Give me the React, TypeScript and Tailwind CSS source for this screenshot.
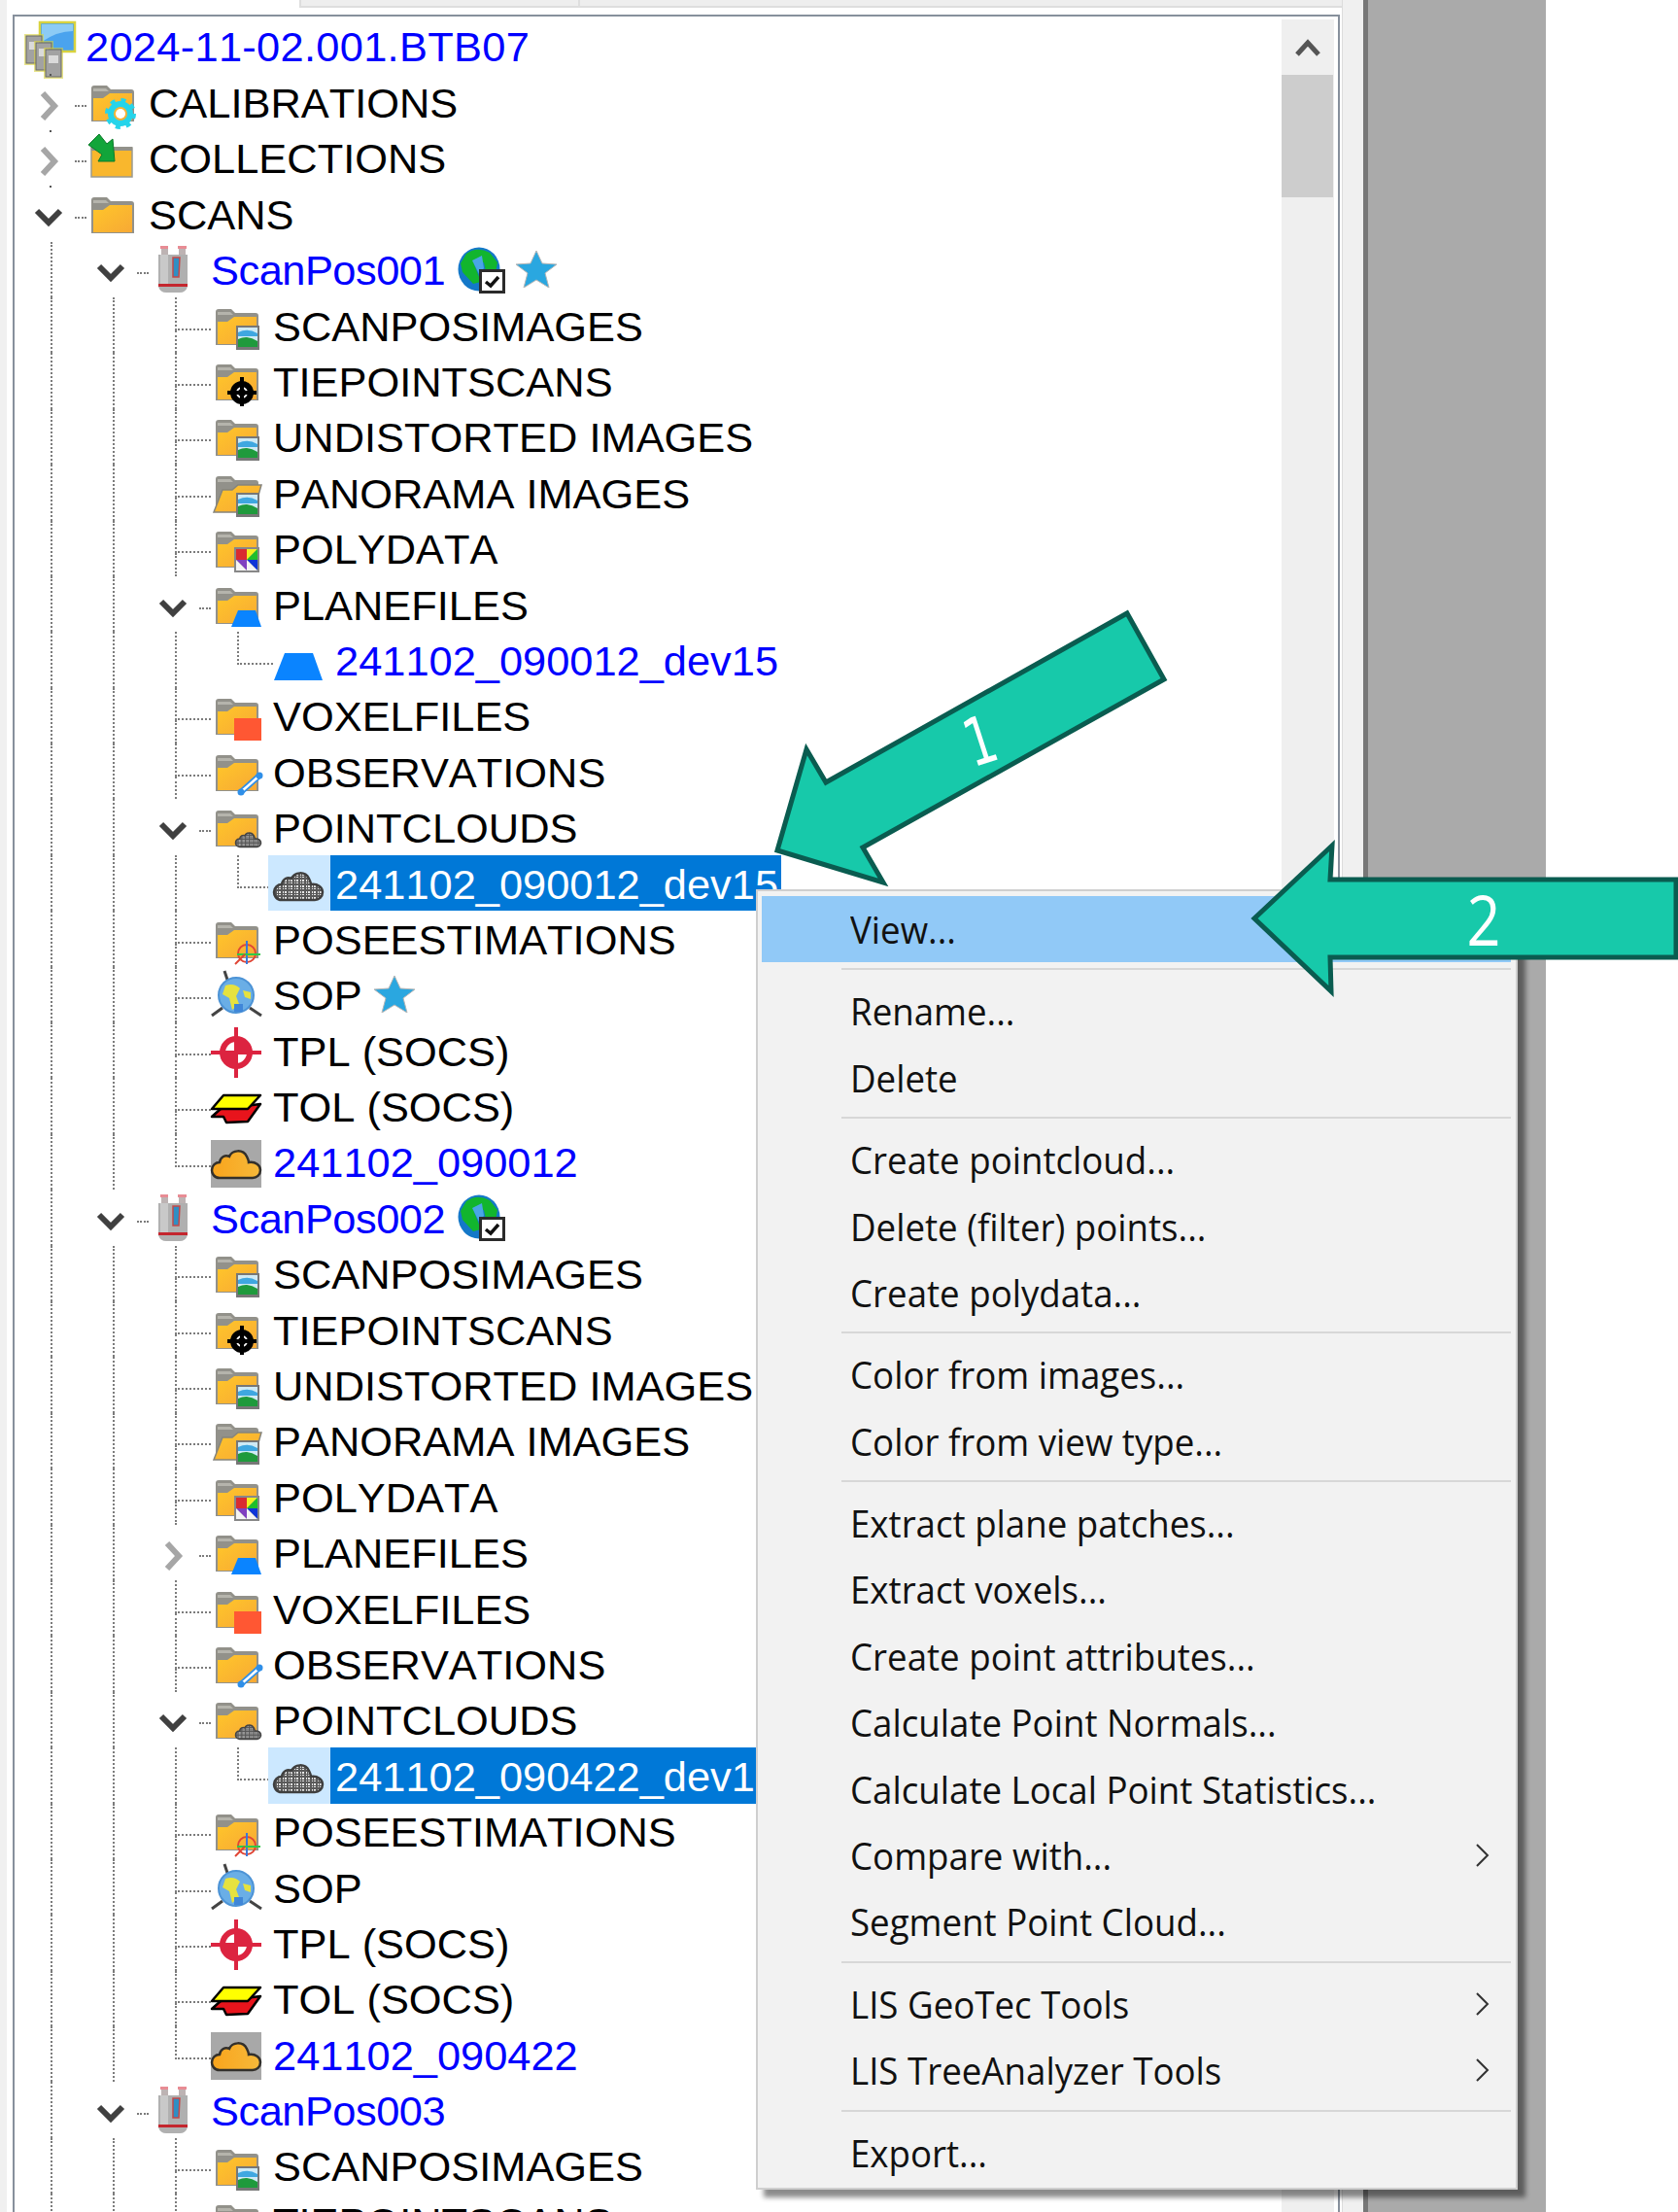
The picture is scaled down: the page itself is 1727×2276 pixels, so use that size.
import React from "react";

type IconName =
  | "root" | "gear" | "collect" | "plain" | "image" | "tie" | "pano" | "poly" | "plane" | "voxel"
  | "obs" | "pc" | "pose" | "sop" | "tpl" | "tol" | "cloudOrange" | "trap" | "cloudGrey" | "scanner";

type Row = {
  label: string;
  level: number;
  icon: IconName;
  blue?: boolean;
  expander?: "open" | "closed";
  last?: boolean;
  selected?: boolean;
  globe?: boolean;
  star?: boolean;
};

const scanChildren = (stamp: string, dev: string, expandPlanes: boolean, starred: boolean): Row[] => {
  const rows: Row[] = [
    { label: "SCANPOSIMAGES", level: 2, icon: "image" },
    { label: "TIEPOINTSCANS", level: 2, icon: "tie" },
    { label: "UNDISTORTED IMAGES", level: 2, icon: "image" },
    { label: "PANORAMA IMAGES", level: 2, icon: "pano" },
    { label: "POLYDATA", level: 2, icon: "poly" },
    { label: "PLANEFILES", level: 2, icon: "plane", expander: expandPlanes ? "open" : "closed" },
  ];
  if (expandPlanes) rows.push({ label: dev, level: 3, icon: "trap", blue: true, last: true });
  rows.push(
    { label: "VOXELFILES", level: 2, icon: "voxel" },
    { label: "OBSERVATIONS", level: 2, icon: "obs" },
    { label: "POINTCLOUDS", level: 2, icon: "pc", expander: "open" },
    { label: dev, level: 3, icon: "cloudGrey", last: true, selected: true },
    { label: "POSEESTIMATIONS", level: 2, icon: "pose" },
    { label: "SOP", level: 2, icon: "sop", star: starred },
    { label: "TPL (SOCS)", level: 2, icon: "tpl" },
    { label: "TOL (SOCS)", level: 2, icon: "tol" },
    { label: stamp, level: 2, icon: "cloudOrange", blue: true, last: true },
  );
  return rows;
};

const rows: Row[] = [
  { label: "CALIBRATIONS", level: 0, icon: "gear", expander: "closed" },
  { label: "COLLECTIONS", level: 0, icon: "collect", expander: "closed" },
  { label: "SCANS", level: 0, icon: "plain", expander: "open" },
  { label: "ScanPos001", level: 1, icon: "scanner", blue: true, expander: "open", globe: true, star: true },
  ...scanChildren("241102_090012", "241102_090012_dev15", true, true),
  { label: "ScanPos002", level: 1, icon: "scanner", blue: true, expander: "open", globe: true },
  ...scanChildren("241102_090422", "241102_090422_dev15", false, false),
  { label: "ScanPos003", level: 1, icon: "scanner", blue: true, expander: "open" },
  { label: "SCANPOSIMAGES", level: 2, icon: "image" },
  { label: "TIEPOINTSCANS", level: 2, icon: "tie" },
];

const menu: (string | { label: string; sub?: boolean; active?: boolean })[] = [
  { label: "View...", active: true },
  "sep",
  { label: "Rename..." },
  { label: "Delete" },
  "sep",
  { label: "Create pointcloud..." },
  { label: "Delete (filter) points..." },
  { label: "Create polydata..." },
  "sep",
  { label: "Color from images..." },
  { label: "Color from view type..." },
  "sep",
  { label: "Extract plane patches..." },
  { label: "Extract voxels..." },
  { label: "Create point attributes..." },
  { label: "Calculate Point Normals..." },
  { label: "Calculate Local Point Statistics..." },
  { label: "Compare with...", sub: true },
  { label: "Segment Point Cloud..." },
  "sep",
  { label: "LIS GeoTec Tools", sub: true },
  { label: "LIS TreeAnalyzer Tools", sub: true },
  "sep",
  { label: "Export..." },
];

const cloudPath = "M9 43 C3 43 1 38 1 35 C1 30 5 27 9 27 C10 21 15 19 19 21 C22 14 33 13 37 21 C39 25 39 26 39 27 C46 26 51 30 51 35 C51 40 47 43 43 43 Z";

const Folder = ({ open }: { open?: boolean }) => (
  <>
    <linearGradient id="folderFill" x1="0" y1="0" x2="1" y2="1">
      <stop offset="0" stopColor="#ffc62a" />
      <stop offset="1" stopColor="#f7a935" />
    </linearGradient>
    <path d="M5 12 Q5 9 8 9 H21 L25 13 H46 Q49 13 49 16 V46 H5 Z" fill="#92918a" />
    <path d="M7 12 H20 L23 15 H7 Z" fill="#b5b4ac" />
    {open ? (
      <path d="M3 46 L12 23 H22 L28 18 H52 L44 46 Z" fill="url(#folderFill)" stroke="#85847c" strokeWidth="1.5" />
    ) : (
      <path d="M7 45 V22 H17 L24 17 H47 V45 Z" fill="url(#folderFill)" />
    )}
  </>
);

const Picture = () => (
  <>
    <rect x="26" y="26" width="24" height="25" fill="#777" />
    <rect x="28" y="28" width="20" height="20" fill="#cfeaf5" />
    <path d="M28 33 Q38 28 48 34 V37 H28 Z" fill="#3fa7e0" />
    <path d="M28 40 Q38 35 48 42 V48 H28 Z" fill="#1f9a3c" />
  </>
);

function TreeIcon({ name }: { name: IconName }) {
  let body: React.ReactNode = null;
  switch (name) {
    case "root":
      body = (
        <>
          <rect x="16" y="1" width="36" height="30" fill="#4aa3ee" stroke="#d8d23f" strokeWidth="2.5" />
          <path d="M18 3 H50 V10 Q34 10 18 21 Z" fill="#8ccbf5" />
          {[0, 10, 20].map((d) => (
            <g key={d}>
              <rect x={0 + d} y={13 + d * 0.7} width="20" height="32" fill="#d8d23f" opacity="0.6" />
              <rect x={2 + d} y={15 + d * 0.7} width="16" height="28" fill="#a2a2a2" stroke="#666" />
              <rect x={5 + d} y={21 + d * 0.7} width="10" height="8" fill="#dadada" />
            </g>
          ))}
        </>
      );
      break;
    case "gear":
      body = (
        <>
          <Folder />
          <circle cx="35" cy="38" r="10" fill="none" stroke="#25d4ea" strokeWidth="6" />
          <circle cx="35" cy="38" r="14" fill="none" stroke="#25d4ea" strokeWidth="4" strokeDasharray="5 6" />
          <circle cx="35" cy="38" r="5" fill="#fff" />
        </>
      );
      break;
    case "collect":
      body = (
        <>
          <path d="M5 16 H47 V46 H5 Z" fill="#f9b72d" stroke="#9a9a90" strokeWidth="1.5" />
          <path d="M5 15 H47 V19 H5 Z" fill="#92918a" />
          <path d="M2 13 L13 2 L21 12 L27 7 L29 30 L12 30 L16 23 Z" fill="#12a53a" stroke="#0b7a2a" />
        </>
      );
      break;
    case "plain":
      body = <Folder />;
      break;
    case "image":
      body = (
        <>
          <Folder />
          <Picture />
        </>
      );
      break;
    case "tie":
      body = (
        <>
          <Folder />
          <circle cx="32" cy="38" r="9" fill="#fff" stroke="#000" strokeWidth="6" />
          <path d="M32 22 V52 M17 38 H47" stroke="#000" strokeWidth="4" />
          <circle cx="32" cy="38" r="4" />
        </>
      );
      break;
    case "pano":
      body = (
        <>
          <Folder open />
          <Picture />
        </>
      );
      break;
    case "poly":
      body = (
        <>
          <Folder />
          <rect x="24" y="25" width="26" height="26" fill="#888" />
          <path d="M26 27 H37 V38 H26 Z" fill="#d92b30" />
          <path d="M37 27 H48 L37 38 Z" fill="#f3ee1f" />
          <path d="M48 27 V38 H37 Z" fill="#1fbf2a" />
          <path d="M48 38 V49 L37 38 Z" fill="#0f35d8" />
          <path d="M37 38 L48 49 H37 Z" fill="#f4f4f4" />
          <path d="M26 38 H37 V49 Z" fill="#7f3fc0" />
          <path d="M26 38 L37 49 H26 Z" fill="#f4f4f4" />
        </>
      );
      break;
    case "plane":
      body = (
        <>
          <Folder />
          <path d="M28 32 H46 L52 49 H21 Z" fill="#0a84ff" />
        </>
      );
      break;
    case "voxel":
      body = (
        <>
          <Folder />
          <rect x="24" y="29" width="28" height="23" fill="#ff5733" />
        </>
      );
      break;
    case "obs":
      body = (
        <>
          <Folder />
          <path d="M31 47 L50 30" stroke="#2f8fe8" strokeWidth="6" />
          <path d="M32 46 L49 31" stroke="#fff" strokeWidth="2.5" />
          <circle cx="31" cy="47" r="3.5" fill="#2f8fe8" />
          <circle cx="50" cy="30" r="3.5" fill="#2f8fe8" />
        </>
      );
      break;
    case "pc":
      body = (
        <>
          <Folder />
          <g transform="translate(25 24) scale(0.52)">
            <pattern id="latticeSmall" width="8" height="8" patternUnits="userSpaceOnUse">
              <rect width="8" height="8" fill="#c4c4c4" />
              <path d="M0 0 H8 V8 M4 0 V8 M0 4 H8" stroke="#555" strokeWidth="2.5" fill="none" />
            </pattern>
            <path d={cloudPath} fill="url(#latticeSmall)" stroke="#444" strokeWidth="3" />
          </g>
        </>
      );
      break;
    case "pose":
      body = (
        <>
          <Folder />
          <circle cx="37" cy="41" r="9" fill="none" stroke="#e04535" strokeWidth="2" />
          <path d="M37 28 V52" stroke="#3b78d8" strokeWidth="2" />
          <path d="M27 42 H51" stroke="#2fc948" strokeWidth="2" />
          <path d="M25 52 L35 42" stroke="#e04535" strokeWidth="2" />
        </>
      );
      break;
    case "sop":
      body = (
        <>
          <path d="M14 2 L18 14 M1 48 L12 40 M52 48 L40 40" stroke="#444" strokeWidth="3" />
          <circle cx="26" cy="27" r="18" fill="#6aaee6" stroke="#4c93d6" strokeWidth="2" />
          <path d="M15 17 Q24 14 30 20 L26 28 L29 36 L22 42 L19 30 L12 26 Z" fill="#e6e23f" />
          <path d="M33 22 L41 24 L41 31 L35 29 Z" fill="#e6e23f" />
          <rect x="24" y="36" width="9" height="8" fill="#3f86d8" />
        </>
      );
      break;
    case "tpl":
      body = (
        <>
          <circle cx="26" cy="28" r="17" fill="#dc2440" />
          <path d="M26 28 V17 A11 11 0 0 0 15 28 Z" fill="#fff" />
          <path d="M26 28 V39 A11 11 0 0 0 37 28 Z" fill="#fff" />
          <path d="M26 2 V54 M0 28 H52" stroke="#dc2440" strokeWidth="4" />
        </>
      );
      break;
    case "tol":
      body = (
        <>
          <path d="M1 37 L10 29 L51 24 L38 42 L16 43 L13 37 Z" fill="#e8141c" stroke="#000" strokeWidth="2.5" strokeLinejoin="round" />
          <path d="M13 15 H51 L38 29 H1 Z" fill="#ffff00" stroke="#000" strokeWidth="2.5" strokeLinejoin="round" />
        </>
      );
      break;
    case "cloudOrange":
      body = (
        <>
          <rect x="0" y="3" width="52" height="49" fill="#a8a8a8" />
          <linearGradient id="cloudFill" x1="0" y1="0" x2="1" y2="0">
            <stop offset="0" stopColor="#f9a41c" />
            <stop offset="1" stopColor="#f6b93a" />
          </linearGradient>
          <g transform="translate(0 -1)">
            <path d={cloudPath} fill="url(#cloudFill)" stroke="#33302b" strokeWidth="2.5" />
          </g>
        </>
      );
      break;
    case "trap":
      body = <path d="M12 19 H41 L51 47 H1 Z" fill="#0a84ff" />;
      break;
    case "cloudGrey":
      body = (
        <>
          <pattern id="lattice" width="6" height="6" patternUnits="userSpaceOnUse">
            <rect width="6" height="6" fill="#e8e8e8" />
            <path d="M0 0 H6 V6 M3 0 V6 M0 3 H6" stroke="#5a5a5a" strokeWidth="2" fill="none" />
          </pattern>
          <path d={cloudPath} fill="url(#lattice)" stroke="#3f3f3f" strokeWidth="2.5" />
        </>
      );
      break;
    case "scanner":
      body = (
        <>
          <rect x="13" y="3" width="7" height="10" fill="#bdb3b3" />
          <rect x="31" y="3" width="7" height="10" fill="#bdb3b3" />
          <rect x="12" y="2" width="8" height="3" fill="#e88c94" />
          <rect x="30" y="2" width="9" height="3" fill="#e88c94" />
          <path d="M10 11 H40 V44 Q38 50 32 50 H18 Q12 50 10 44 Z" fill="#b0b0b0" />
          <rect x="12" y="11" width="8" height="30" fill="#c9c9c9" />
          <path d="M25 14 H32 L31 34 H25 Z" fill="#2e8fc4" stroke="#c2494a" strokeWidth="1.5" />
          <rect x="10" y="41" width="30" height="3" fill="#c4262e" />
        </>
      );
      break;
  }
  return (
    <svg width="52" height="52" viewBox="0 0 52 52" className="shrink-0 overflow-visible">
      {body}
    </svg>
  );
}

const Chevron = ({ open }: { open?: boolean }) => (
  <svg width="30" height="30" viewBox="0 0 30 30" className="shrink-0 mt-2">
    {open ? (
      <path d="M3 8 L15 20 L27 8" fill="none" stroke="#404040" strokeWidth="6" />
    ) : (
      <path d="M9 2 L21 15 L9 28" fill="none" stroke="#a6a6a6" strokeWidth="6" />
    )}
  </svg>
);

const Globe = () => (
  <span className="relative ml-[13px] block h-[47px] w-[48px] shrink-0">
    <svg width="44" height="46" viewBox="0 0 44 46">
      <ellipse cx="22" cy="23" rx="21.5" ry="22.5" fill="#1478c8" />
      <path d="M9 7 Q20 -1 33 6 L41 16 L38 32 L30 30 L27 16 L17 18 L24 36 L16 38 L5 26 L3 17 Z" fill="#12b52e" />
      <path d="M15 14 L25 9 L27 22 L22 28 Z" fill="#4aa6e6" />
    </svg>
    <svg width="27" height="25" viewBox="0 0 27 25" className="absolute left-[22px] top-[23px]">
      <rect x="1.5" y="1.5" width="24" height="22" fill="#fff" stroke="#2b2b2b" strokeWidth="3" />
      <path d="M7 13 L12 17 L20 8" fill="none" stroke="#111" strokeWidth="3.5" />
    </svg>
  </span>
);

const Star = () => (
  <svg width="42" height="38" viewBox="0 0 42 38" className="ml-[12px] shrink-0">
    <path d="M21 0 L27 13 L42 14 L30 23 L34 38 L21 30 L8 38 L12 23 L0 14 L15 13 Z" fill="#2aa7e0" stroke="#b5b5b5" strokeWidth="1" />
  </svg>
);

// dotted guide running through a whole row
const Guide = () => (
  <div className="h-full w-16 shrink-0">
    <div className="ml-8 h-full border-l-2 border-dotted border-[#7c7c7c]" />
  </div>
);

function Connector({ row }: { row: Row }) {
  if (row.expander) {
    return (
      <div className="relative flex h-full w-[69px] shrink-0 items-center">
        {row.level === 0 && <span className="absolute left-[31px] top-0 h-[2px] w-[2px] bg-[#555]" />}
        <span className="ml-[15px]">
          <Chevron open={row.expander === "open"} />
        </span>
        <span className="ml-[12px] mt-2 w-[12px] border-b-2 border-dotted border-[#7c7c7c]" />
      </div>
    );
  }
  return (
    <div className="flex h-full w-[69px] shrink-0 flex-col">
      <div className="ml-8 h-[calc(50%+5px)] border-b-2 border-l-2 border-dotted border-[#7c7c7c]" />
      {!row.last && <div className="ml-8 h-[calc(50%-5px)] border-l-2 border-dotted border-[#7c7c7c]" />}
    </div>
  );
}

function TreeRow({ row }: { row: Row }) {
  return (
    <div className={`flex h-[57.4px] items-center whitespace-nowrap ${row.level === 1 ? "tracking-[-0.5px]" : ""}`}>
      {Array.from({ length: row.level }).map((_, i) => (
        <Guide key={i} />
      ))}
      <Connector row={row} />
      {row.selected ? (
        <>
          <div className="-ml-[5px] flex h-full w-[64px] shrink-0 items-center bg-[#cce8ff] pl-[5px]">
            <TreeIcon name={row.icon} />
          </div>
          <span className="flex h-full items-center bg-[#0078d7] pl-[5px] pr-[3px] pt-[3px] text-white">{row.label}</span>
        </>
      ) : (
        <>
          <div className="w-[64px] shrink-0">
            <TreeIcon name={row.icon} />
          </div>
          <span className={`mt-[3px] ${row.blue ? "text-[#0000ff]" : "text-black"}`}>{row.label}</span>
        </>
      )}
      {row.globe && <Globe />}
      {row.star && <Star />}
    </div>
  );
}

function ContextMenu() {
  return (
    <div
      className="absolute left-[778px] top-[915px] h-[1338px] w-[784px] border-2 border-[#cfcfcf] bg-[#f2f2f2] pl-[4px] pr-[5px] pt-[5px] text-[39px] text-[#111] shadow-[8px_8px_5px_rgba(0,0,0,0.45)]"
      style={{ fontFamily: '"Open Sans", sans-serif' }}
    >
      {menu.map((item, i) =>
        typeof item === "string" ? (
          <div key={i} className="ml-[82px] h-[16px] pt-[6px]">
            <div className="h-[2px] w-full bg-[#d7d7d7]" />
          </div>
        ) : (
          <div key={i} className={`flex h-[68.4px] items-center justify-between pl-[91px] pr-[22px] ${item.active ? "bg-[#91c9f7]" : ""}`}>
            <span className="inline-block origin-left scale-x-[0.94] whitespace-nowrap">{item.label}</span>
            {item.sub && (
              <svg width="15" height="24" viewBox="0 0 15 24">
                <path d="M2 1 L13 12 L2 23" fill="none" stroke="#333" strokeWidth="2" />
              </svg>
            )}
          </div>
        ),
      )}
    </div>
  );
}

export default function App() {
  return (
    <div className="relative h-[2276px] w-[1727px] overflow-hidden bg-white [font-kerning:none]" style={{ fontFamily: '"Liberation Sans", Arial, sans-serif' }}>
      <div className="flex h-full">
        <div className="w-[7px] shrink-0 bg-[#f0f0f0]" />

        {/* tree panel */}
        <div className="flex w-[1375px] shrink-0 flex-col border-r border-[#dcdcdc] bg-white">
          <div className="flex h-[15px] shrink-0 items-start">
            <div className="ml-[301px] flex h-[8px] flex-1 border-b-2 border-l-2 border-[#dedede] bg-[#eeeeee]">
              <div className="w-[287px] border-r-2 border-[#dedede]" />
            </div>
          </div>
          <div className="ml-[6px] mr-[2px] flex min-h-0 flex-1 border-l-2 border-r-2 border-t-2 border-[#87909c]">
            <div className="min-w-0 flex-1 overflow-hidden pl-[5px] pt-[2px] text-[43.4px]">
              <div className="flex h-[57.4px] items-center whitespace-nowrap pl-[5px]">
                <TreeIcon name="root" />
                <span className="ml-[11px] mt-[2px] tracking-[0.3px] text-[#0000ff]">2024-11-02.001.BTB07</span>
              </div>
              {rows.map((row, i) => (
                <TreeRow key={i} row={row} />
              ))}
            </div>

            {/* scrollbar */}
            <div className="mr-[4px] mt-[3px] flex w-[54px] shrink-0 flex-col bg-[#efefef]">
              <div className="flex h-[57px] items-center justify-center">
                <svg width="26" height="20" viewBox="0 0 26 20">
                  <path d="M2 17 L13 5 L24 17" fill="none" stroke="#555" strokeWidth="5" />
                </svg>
              </div>
              <div className="mr-px h-[126px] bg-[#cdcdcd]" />
            </div>
          </div>
        </div>

        <div className="w-[21px] shrink-0 bg-[#f0f0f0]" />
        <div className="w-[5px] shrink-0 bg-[#777777]" />
        <div className="w-[183px] shrink-0 bg-[#aaaaaa]" />
      </div>

      <ContextMenu />

      {/* callout arrows */}
      <svg className="absolute left-0 top-0" width="1727" height="2276" viewBox="0 0 1727 2276">
        <polygon points="1160,631 1198,699 888,872 909,908 800,875 830,771 850,805" fill="#17c9aa" stroke="#0a5c50" strokeWidth="5" />
        <polygon points="1371,870 1369,905 1725,905 1725,985 1369,985 1370,1020 1291,945" fill="#17c9aa" stroke="#0a5c50" strokeWidth="5" />
      </svg>
      <span className="absolute left-[1009px] top-[763px] -translate-x-1/2 -translate-y-1/2 -rotate-[18deg] scale-x-[0.72] text-[68px] leading-none text-white" style={{ fontFamily: '"DejaVu Sans", sans-serif' }}>
        1
      </span>
      <span className="absolute left-[1527px] top-[945px] -translate-x-1/2 -translate-y-1/2 scale-x-[0.85] text-[72px] leading-none text-white" style={{ fontFamily: '"Open Sans", sans-serif' }}>
        2
      </span>
    </div>
  );
}
